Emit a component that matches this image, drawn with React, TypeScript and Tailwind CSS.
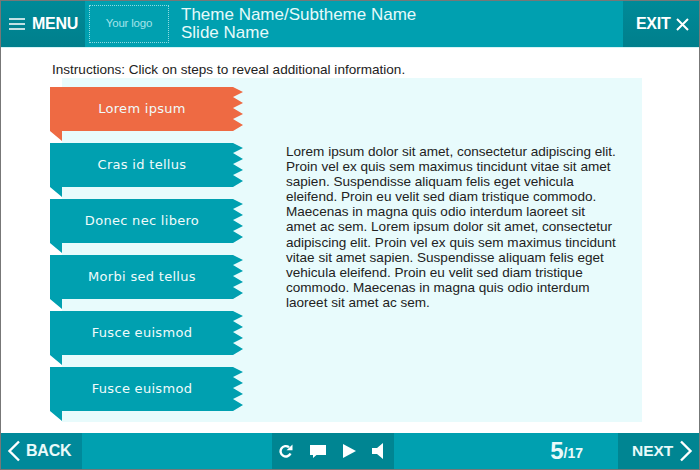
import React from 'react';

const steps = ['Lorem ipsum', 'Cras id tellus', 'Donec nec libero', 'Morbi sed tellus', 'Fusce euismod', 'Fusce euismod'];

const Chevron: React.FC<{ dir: 'left' | 'right' }> = ({ dir }) => (
    <svg width="14" height="22" viewBox="0 0 14 22" fill="none" stroke="white" strokeWidth="2.4">
        <path d={dir === 'left' ? 'M12 1.5 2.5 11 12 20.5' : 'M2 1.5 11.5 11 2 20.5'} />
    </svg>
);

const Ribbon: React.FC<{ label: string; active?: boolean }> = ({ label, active }) => (
    <button
        className={`h-[54px] w-[193px] pb-[10px] pr-[9px] flex items-center justify-center text-[13px] tracking-[0.3px] text-[#f0fbfb] font-['DejaVu_Sans',sans-serif] [clip-path:polygon(0_0,183px_0,193px_5px,183px_10px,193px_16px,183px_21px,193px_27px,183px_32px,193px_38px,183px_44px,12px_44px,12px_54px,0_44px)] ${active ? 'bg-[#ee6a43]' : 'bg-[#00a0b0]'}`}
    >
        {label}
    </button>
);

export default function App() {
    return (
        <div className="w-[700px] h-[470px] flex flex-col bg-white overflow-hidden border-l border-t border-r border-[#777] font-['Liberation_Sans',sans-serif]">
            <header className="h-[46px] flex flex-shrink-0 bg-[#00a0b0] text-white">
                <div className="w-[84px] flex items-center gap-[7px] pl-[8px] bg-gradient-to-b from-[#008a98] to-[#007f8c]">
                    <svg width="16" height="12" viewBox="0 0 16 12" stroke="white" strokeWidth="1.5">
                        <path d="M0 1h16M0 6h16M0 11h16" />
                    </svg>
                    <span className="text-[16px] font-bold tracking-[-0.3px]">MENU</span>
                </div>
                <div className="ml-[4px] mt-[4px] w-[80px] h-[38px] border border-dotted border-[#8fdbe2] flex items-center justify-center text-[11.5px] tracking-[-0.2px] text-[#a5e4ea]">
                    Your logo
                </div>
                <div className="ml-[12px] mt-[5px] text-[17px] leading-[18px] text-[#e6fafa]">
                    <div>Theme Name/Subtheme Name</div>
                    <div>Slide Name</div>
                </div>
                <div className="ml-auto w-[76px] flex items-center gap-[6px] pl-[13px] bg-gradient-to-b from-[#008a98] to-[#007f8c]">
                    <span className="text-[16px] font-bold tracking-[-0.3px]">EXIT</span>
                    <svg width="13" height="13" viewBox="0 0 13 13" stroke="white" strokeWidth="2" fill="none">
                        <path d="M1 1l11 11M12 1 1 12" />
                    </svg>
                </div>
            </header>

            <main className="flex-1 flex flex-col border-t border-[#d5f3f6] pl-[51px] pb-[11px]">
                <p className="mt-[14px] h-[16px] text-[13.55px] leading-[16px] text-[#222]">
                    Instructions: Click on steps to reveal additional information.
                </p>
                <div className="flex flex-1 ml-[10px] mr-[57px] bg-[#e8fbfc]">
                    <div className="-ml-[12px] mt-[9px] flex flex-col gap-[2px] flex-shrink-0">
                        {steps.map((s, i) => (
                            <Ribbon key={i} label={s} active={i === 0} />
                        ))}
                    </div>
                    <p className="ml-[43px] mt-[66px] w-[332px] text-[13.55px] leading-[15.1px] text-[#222]">
                        Lorem ipsum dolor sit amet, consectetur adipiscing elit. Proin vel ex quis sem maximus tincidunt vitae sit amet sapien. Suspendisse aliquam felis eget vehicula eleifend. Proin eu velit sed diam tristique commodo. Maecenas in magna quis odio interdum laoreet sit amet ac sem. Lorem ipsum dolor sit amet, consectetur adipiscing elit. Proin vel ex quis sem maximus tincidunt vitae sit amet sapien. Suspendisse aliquam felis eget vehicula eleifend. Proin eu velit sed diam tristique commodo. Maecenas in magna quis odio interdum laoreet sit amet ac sem.
                    </p>
                </div>
            </main>

            <footer className="h-[37px] flex flex-shrink-0 items-stretch bg-[#00a0b0] text-white border-b border-[#777]">
                <div className="w-[81px] flex items-center gap-[5px] pl-[6px] bg-[#00899a]">
                    <Chevron dir="left" />
                    <span className="text-[16px] font-bold tracking-[-0.2px] text-[#eafafa]">BACK</span>
                </div>
                <div className="ml-[190px] w-[122px] flex items-center gap-[17px] pl-[7px] bg-[#008592]">
                    <svg width="14" height="14" viewBox="0 0 14 14" fill="none" stroke="white" strokeWidth="2.4">
                        <path d="M11.5 9.5A5.2 5.2 0 1 1 10 3.2" />
                        <path d="M7.5 6.2h6V0.5z" fill="white" stroke="none" />
                    </svg>
                    <svg width="16" height="14" viewBox="0 0 16 14" fill="white">
                        <path d="M0 1h16v10H6.5L3 14v-3H0z" />
                    </svg>
                    <svg width="13" height="14" viewBox="0 0 13 14" fill="white">
                        <path d="M0 0l13 7-13 7z" />
                    </svg>
                    <svg width="11" height="16" viewBox="0 0 11 16" fill="white" className="-ml-[1px]">
                        <path d="M11 0v16L5 11H0V5h5z" />
                    </svg>
                </div>
                <div className="ml-auto mr-[35px] flex items-center font-bold text-[#eafafa]">
                    <span className="text-[24px]">5</span>
                    <span className="text-[14px] mt-[4px]">/17</span>
                </div>
                <div className="w-[81px] flex items-center gap-[6px] pl-[14px] bg-[#008592]">
                    <span className="text-[15.5px] font-bold text-[#eafafa]">NEXT</span>
                    <Chevron dir="right" />
                </div>
            </footer>
        </div>
    );
}
